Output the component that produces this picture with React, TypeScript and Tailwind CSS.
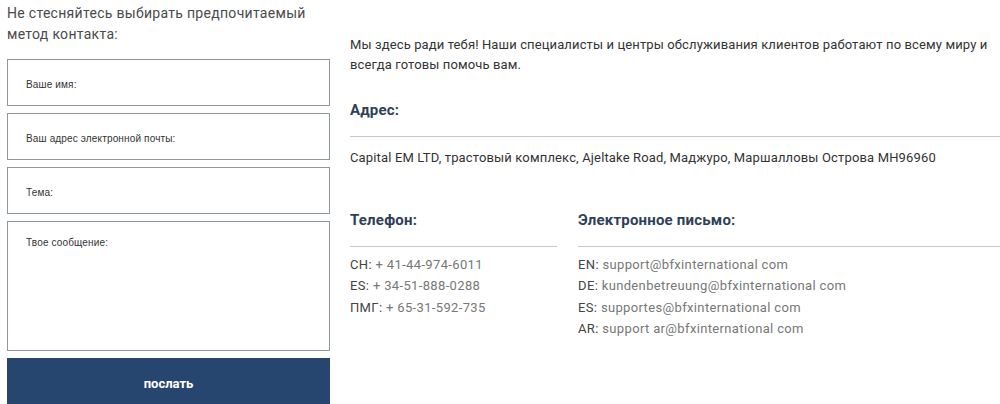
const font = { fontFamily: 'Roboto, "Noto Sans", sans-serif' };

function Field({ label, tall }: { label: string; tall?: boolean }) {
  return (
    <div
      className={`border border-[#8f97a3] bg-white pl-[18px] text-[10px] tracking-[0.15px] text-[#333] ${
        tall ? 'h-[130px] pt-[13px]' : 'h-[47px] flex items-center pt-[4px]'
      }`}
      style={{ fontFamily: '"Liberation Sans", Arial, sans-serif' }}
    >
      {label}
    </div>
  );
}

function Heading({ children }: { children: React.ReactNode }) {
  return (
    <div className="border-b border-[#c9c9c9] pb-[16px]">
      <h3 className="text-[15px] font-bold leading-[20px] tracking-[0.2px] text-[#2f3f58]">{children}</h3>
    </div>
  );
}

function Row({ k, v }: { k: string; v: string }) {
  return (
    <div className="h-[21.3px] leading-[21px] tracking-[0.35px]">
      <span className="text-[#444]">{k}: </span>
      <span className="text-[#777]">{v}</span>
    </div>
  );
}

export default function App() {
  return (
    <div className="flex h-[404px] w-[1000px] overflow-hidden bg-white" style={font}>
      <div className="ml-[7px] w-[323px] shrink-0">
        <p className="pt-[3px] text-[14px] leading-[21px] tracking-[0.3px] text-[#4a4a4a]">
          Не стесняйтесь выбирать предпочитаемый
          <br />
          метод контакта:
        </p>
        <form className="mt-[14px] flex flex-col gap-[7px]">
          <Field label="Ваше имя:" />
          <Field label="Ваш адрес электронной почты:" />
          <Field label="Тема:" />
          <Field label="Твое сообщение:" tall />
          <button
            type="button"
            className="h-[52px] w-full shrink-0 bg-[#27466f] text-[13px] font-bold text-white"
          >
            послать
          </button>
        </form>
      </div>

      <div className="ml-[20px] flex-1 pt-[35px] text-[13px] text-[#333]">
        <p className="leading-[20px] tracking-[0.12px]">
          Мы здесь ради тебя! Наши специалисты и центры обслуживания клиентов работают по всему миру и
          всегда готовы помочь вам.
        </p>
        <div className="mt-[25px]">
          <Heading>Адрес:</Heading>
          <p className="mt-[10px] leading-[21px] tracking-[0.15px]">
            Capital EM LTD, трастовый комплекс, Ajeltake Road, Маджуро, Маршалловы Острова MH96960
          </p>
        </div>
        <div className="mt-[42px] flex gap-[21px]">
          <div className="w-[207px]">
            <Heading>Телефон:</Heading>
            <div className="mt-[7px]">
              <Row k="CH" v="+ 41-44-974-6011" />
              <Row k="ES" v="+ 34-51-888-0288" />
              <Row k="ПМГ" v="+ 65-31-592-735" />
            </div>
          </div>
          <div className="flex-1">
            <Heading>Электронное письмо:</Heading>
            <div className="mt-[7px]">
              <Row k="EN" v="support@bfxinternational com" />
              <Row k="DE" v="kundenbetreuung@bfxinternational com" />
              <Row k="ES" v="supportes@bfxinternational com" />
              <Row k="AR" v="support ar@bfxinternational com" />
            </div>
          </div>
        </div>
      </div>
    </div>
  );
}
